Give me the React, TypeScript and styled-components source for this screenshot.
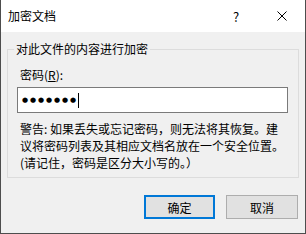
import React from "react";
import styled, { createGlobalStyle } from "styled-components";

const Global = createGlobalStyle`
  html, body { margin: 0; padding: 0; background: #ffffff; }
  * { box-sizing: border-box; }
`;

const FONT = `"Microsoft YaHei", "Noto Sans CJK SC", "Noto Sans", sans-serif`;

const Window = styled.div`
  width: 306px;
  height: 234px;
  display: flex;
  flex-direction: column;
  border: 1px solid #4d4d4d;
  border-top: none;
  background: #f0f0f0;
  font-family: ${FONT};
  font-size: 12px;
  color: #000;
  overflow: hidden;
`;

const TitleBar = styled.div`
  height: 32px;
  flex: none;
  display: flex;
  align-items: center;
  background: #ffffff;
  padding-left: 7px;
`;

const Title = styled.div`
  flex: 1;
  font-size: 12px;
  line-height: 16px;
`;

const CaptionButton = styled.div`
  width: 46px;
  height: 32px;
  display: flex;
  align-items: center;
  justify-content: center;
  font-size: 13px;
  color: #000;
`;

const Body = styled.div`
  flex: 1;
  display: flex;
  flex-direction: column;
  padding: 9px 6px 0 6px;
`;

const Group = styled.fieldset`
  margin: 0;
  padding: 10px 10px 6px 9px;
  border: 1px solid #dcdcdc;
  min-width: 0;
`;

const Legend = styled.legend`
  padding: 0 2px;
  margin-left: -3px;
  font-size: 12px;
  line-height: 16px;
`;

const Label = styled.div`
  margin-left: 3px;
  line-height: 16px;
  margin-bottom: 4px;
`;

const Underline = styled.span`
  text-decoration: underline;
  text-underline-offset: 1px;
`;

const PasswordBox = styled.div`
  height: 26px;
  border: 1px solid #7a7a7a;
  background: #ffffff;
  display: flex;
  align-items: center;
  padding-left: 4px;
  margin-bottom: 7px;
`;

const Dots = styled.span`
  font-family: "DejaVu Sans", sans-serif;
  font-size: 7px;
  letter-spacing: 1.9px;
  line-height: 14px;
`;

const Caret = styled.span`
  display: inline-block;
  width: 1px;
  height: 15px;
  background: #000;
`;

const Warning = styled.div`
  margin-left: 3px;
  line-height: 17px;
  white-space: nowrap;
`;

const ButtonRow = styled.div`
  display: flex;
  justify-content: flex-end;
  gap: 11px;
  margin-top: 17px;
  padding-right: 1px;
`;

const Button = styled.div<{ $primary?: boolean }>`
  width: ${(p) => (p.$primary ? 71 : 72)}px;
  height: 24px;
  display: flex;
  align-items: center;
  justify-content: center;
  background: #e1e1e1;
  border: ${(p) => (p.$primary ? "2px solid #0078d7" : "1px solid #adadad")};
  font-size: 12px;
`;

export default function App() {
  return (
    <>
      <Global />
      <Window>
        <TitleBar>
          <Title>加密文档</Title>
          <CaptionButton>?</CaptionButton>
          <CaptionButton>
            <svg width="10" height="10" viewBox="0 0 10 10">
              <path d="M0.5 0.5 L9.5 9.5 M9.5 0.5 L0.5 9.5" stroke="#000" strokeWidth="1" fill="none" />
            </svg>
          </CaptionButton>
        </TitleBar>
        <Body>
          <Group>
            <Legend>对此文件的内容进行加密</Legend>
            <Label>
              密码(<Underline>R</Underline>):
            </Label>
            <PasswordBox>
              <Dots>●●●●●●●</Dots>
              <Caret />
            </PasswordBox>
            <Warning>
              警告: 如果丢失或忘记密码，则无法将其恢复。建
              <br />
              议将密码列表及其相应文档名放在一个安全位置。
              <br />
              (请记住，密码是区分大小写的。）
            </Warning>
          </Group>
          <ButtonRow>
            <Button $primary>确定</Button>
            <Button>取消</Button>
          </ButtonRow>
        </Body>
      </Window>
    </>
  );
}
